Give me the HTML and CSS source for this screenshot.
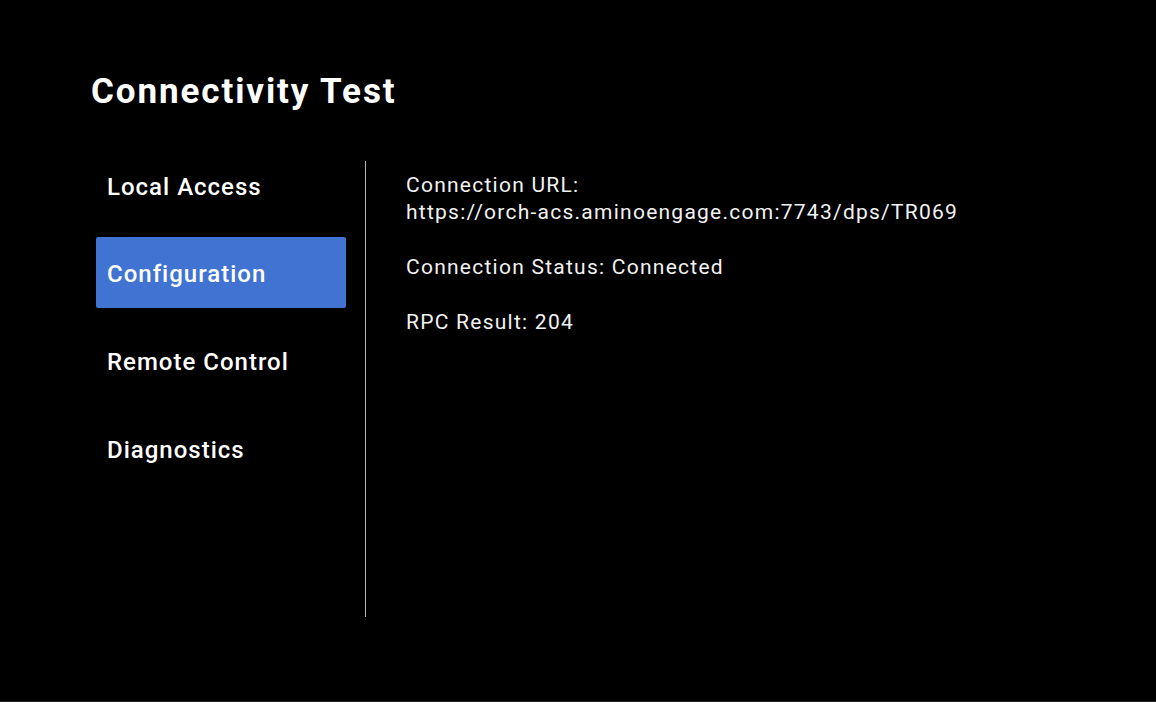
FILE: index.html
```html
<!DOCTYPE html>
<html lang="en">

<head>
    <meta charset="UTF-8">
    <meta name="viewport" content="width=device-width, initial-scale=1.0">
    <title>Connectivity Test</title>
    <link rel="stylesheet" href="styles.css">
</head>

<body>
    <h1 class="page-title">Connectivity Test</h1>

    <div class="main">
        <!-- Left menu -->
        <ul class="menu">
            <li class="menu-item">Local Access</li>
            <li class="menu-item selected">Configuration</li>
            <li class="menu-item">Remote Control</li>
            <li class="menu-item">Diagnostics</li>
        </ul>

        <!-- Details panel -->
        <div class="details">
            <p>Connection URL:<br>https://orch-acs.aminoengage.com:7743/dps/TR069</p>
            <p>Connection Status: Connected</p>
            <p>RPC Result: 204</p>
        </div>
    </div>
</body>

</html>
```

FILE: styles.css
```css
html,
body {
    margin: 0;
    padding: 0;
    background-color: #000;
}

body {
    height: 701px;
    border-bottom: 1px solid #1e1e1e;
    font-family: Roboto, 'Noto Sans', sans-serif;
    color: #fff;
    overflow: hidden;
}

.page-title {
    margin: 71px 0 0 91px;
    font-size: 35px;
    line-height: 41px;
    font-weight: 700;
    letter-spacing: 1.9px;
}

.main {
    display: flex;
    align-items: flex-start;
    margin-top: 37px;
}

.menu {
    list-style: none;
    margin: 0 0 0 96px;
    padding: 0;
    width: 250px;
    display: flex;
    flex-direction: column;
    gap: 17px;
}

.menu-item {
    box-sizing: border-box;
    height: 71px;
    padding: 4px 0 0 11px;
    line-height: 67px;
    font-size: 24px;
    font-weight: 500;
    letter-spacing: 1px;
    border-radius: 2px;
}

/* first label sits a little lower than the grid */
.menu-item:first-child {
    margin-top: 1px;
    margin-bottom: -1px;
}

.menu-item.selected {
    background-color: #4174d2;
}

.details {
    box-sizing: border-box;
    margin-top: 12px;
    margin-left: 19px;
    height: 456px;
    border-left: 1px solid #b4b4b4;
    padding: 11px 0 0 40px;
    font-size: 21px;
    line-height: 27px;
    letter-spacing: 1.25px;
    color: #f2f2f2;
}

.details p {
    margin: 0 0 28px 0;
}
```
